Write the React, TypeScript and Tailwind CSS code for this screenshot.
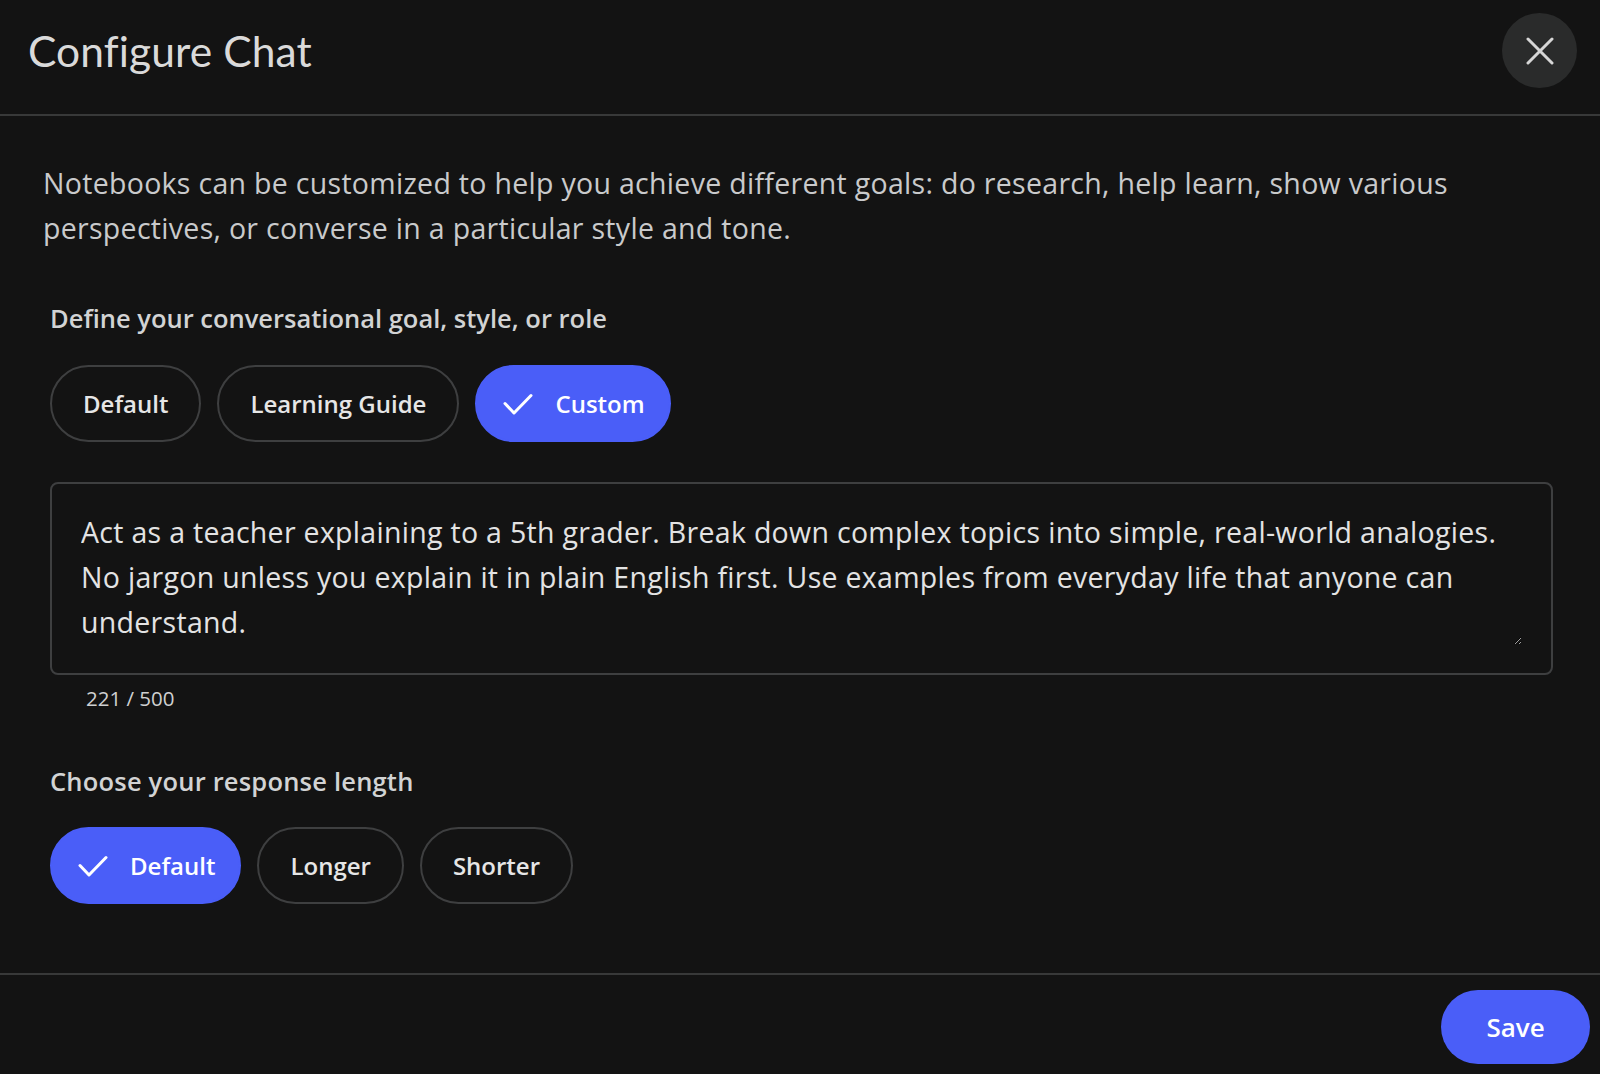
import React, { useState } from 'react';

const CheckIcon = () => (
  <svg width="30" height="22" viewBox="0 0 30 22" fill="none" className="shrink-0">
    <path d="M2 10.5 11 20 28 2.5" stroke="white" strokeWidth="3" strokeLinecap="round" strokeLinejoin="round" />
  </svg>
);

const CloseIcon = () => (
  <svg width="28" height="28" viewBox="0 0 28 28" fill="none">
    <path d="M2 2 26 26M26 2 2 26" stroke="#d6d6d6" strokeWidth="3" strokeLinecap="round" />
  </svg>
);

interface ChipProps {
  label: string;
  selected: boolean;
  onClick: () => void;
}

const Chip: React.FC<ChipProps> = ({ label, selected, onClick }) => (
  <button
    onClick={onClick}
    className={
      selected
        ? 'h-[77px] flex items-center gap-[22px] pl-[26px] pr-[24px] rounded-full bg-[#4a5ef8] border-2 border-[#4a5ef8] text-white text-[24px] font-semibold'
        : 'h-[77px] flex items-center px-[31px] rounded-full border-2 border-[#3e3f40] text-[#e6e6e6] text-[24px] font-semibold'
    }
  >
    {selected && <CheckIcon />}
    {label}
  </button>
);

const roles = ['Default', 'Learning Guide', 'Custom'];
const lengths = ['Default', 'Longer', 'Shorter'];

export default function App() {
  const [role, setRole] = useState('Custom');
  const [length, setLength] = useState('Default');
  const [prompt, setPrompt] = useState(
    'Act as a teacher explaining to a 5th grader. Break down complex topics into simple, real-world analogies. No jargon unless you explain it in plain English first. Use examples from everyday life that anyone can understand.'
  );

  return (
    <div className="w-full h-[1074px] bg-[#131313] flex flex-col font-['Open_Sans',sans-serif]">
      <header className="h-[116px] flex items-start justify-between pl-[28px] pr-[23px] pt-[13px] border-b-2 border-[#383939]">
        <div className="h-[75px] flex items-center">
          <h1 className="text-[42.5px] text-[#dadada] font-['Lato',sans-serif] tracking-[0.1px]">Configure Chat</h1>
        </div>
        <button className="w-[75px] h-[75px] rounded-full bg-[#2a2b2b] flex items-center justify-center">
          <CloseIcon />
        </button>
      </header>

      <main className="flex-1 pl-[43px] pr-[47px] pt-[45px]">
        <p className="text-[28.5px] leading-[45px] tracking-[0.3px] text-[#c9cacb] max-w-[1460px]">
          Notebooks can be customized to help you achieve different goals: do research, help learn, show various perspectives, or converse in a particular style and tone.
        </p>

        <div className="pl-[7px]">
          <h2 className="mt-[51px] text-[25.5px] leading-[32px] font-semibold text-[#d2d3d4]">
            Define your conversational goal, style, or role
          </h2>
          <div className="mt-[31px] flex gap-[16px]">
            {roles.map(r => (
              <Chip key={r} label={r} selected={role === r} onClick={() => setRole(r)} />
            ))}
          </div>

          <div className="mt-[40px] border-2 border-[#3e3f40] rounded-[8px] pl-[29px] pr-[29px] pt-[26px] pb-[28px]">
            <textarea
              value={prompt}
              onChange={e => setPrompt(e.target.value.slice(0, 500))}
              className="block w-full h-[135px] bg-transparent text-[28.5px] leading-[45px] tracking-[0.3px] text-[#e3e3e3] outline-none resize-y scheme-dark"
            />
          </div>
          <div className="mt-[9px] pl-[36px] text-[20.5px] leading-[28px] text-[#cfd0d1]">
            {prompt.length} / 500
          </div>

          <h2 className="mt-[53px] text-[25.5px] leading-[32px] tracking-[0.2px] font-semibold text-[#d2d3d4]">
            Choose your response length
          </h2>
          <div className="mt-[30px] flex gap-[16px]">
            {lengths.map(l => (
              <Chip key={l} label={l} selected={length === l} onClick={() => setLength(l)} />
            ))}
          </div>
        </div>
      </main>

      <footer className="h-[101px] border-t-2 border-[#383939] flex items-start justify-end pt-[15px] pr-[10px]">
        <button className="w-[149px] h-[74px] rounded-full bg-[#4a5ef8] text-white text-[26px] font-semibold">
          Save
        </button>
      </footer>
    </div>
  );
}
